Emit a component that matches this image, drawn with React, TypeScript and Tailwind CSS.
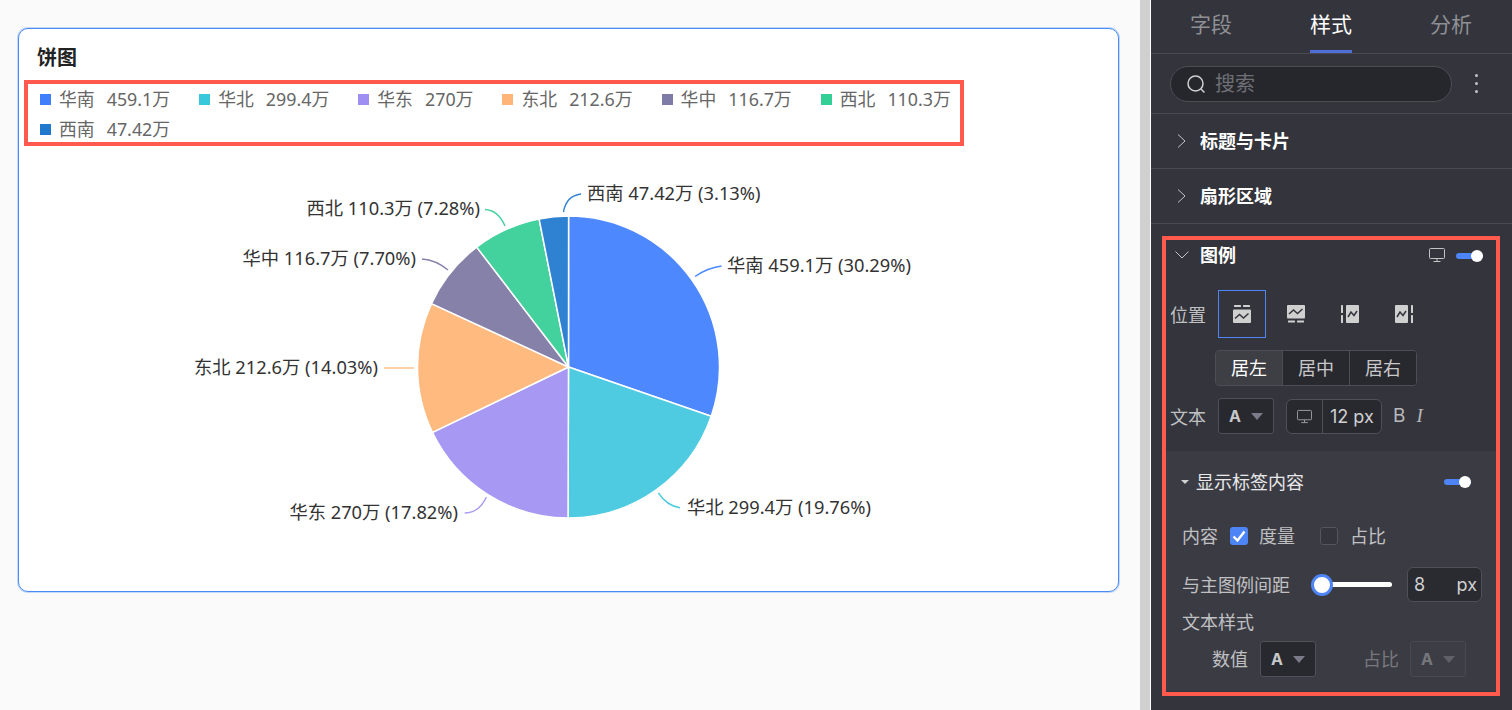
import { ReactNode } from 'react';

const sans = "font-['Noto_Sans','Noto_Sans_CJK_SC',sans-serif]";
const ui = "font-['Inter','Noto_Sans_CJK_SC',sans-serif]";

interface Region {
  name: string;
  value: string;
  percent: number;
  legend: string;
  fill: string;
  label: string;
  labelX: number;
  labelY: number;
  anchor: 'start' | 'end';
  leader: string;
}

const regions: Region[] = [
  { name: '华南', value: '459.1万', percent: 30.29, legend: 'bg-[#3f7ffc]', fill: '#4d88ff', label: '华南 459.1万 (30.29%)', labelX: 727, labelY: 264, anchor: 'start', leader: 'M695 276.5Q707 268 721.5 266' },
  { name: '华北', value: '299.4万', percent: 19.76, legend: 'bg-[#38c8dc]', fill: '#4ecbe0', label: '华北 299.4万 (19.76%)', labelX: 687, labelY: 506, anchor: 'start', leader: 'M658.4 493Q667 506 680 507.7' },
  { name: '华东', value: '270万', percent: 17.82, legend: 'bg-[#a08ff2]', fill: '#a798f3', label: '华东 270万 (17.82%)', labelX: 458, labelY: 511, anchor: 'end', leader: 'M486.4 497Q479 513 464.7 513' },
  { name: '东北', value: '212.6万', percent: 14.03, legend: 'bg-[#ffb577]', fill: '#ffba80', label: '东北 212.6万 (14.03%)', labelX: 378, labelY: 366, anchor: 'end', leader: 'M414 368H384' },
  { name: '华中', value: '116.7万', percent: 7.7, legend: 'bg-[#7e7ba6]', fill: '#8581a9', label: '华中 116.7万 (7.70%)', labelX: 416, labelY: 257, anchor: 'end', leader: 'M448 270Q436 260 422 259' },
  { name: '西北', value: '110.3万', percent: 7.28, legend: 'bg-[#33cf96]', fill: '#43d19e', label: '西北 110.3万 (7.28%)', labelX: 480, labelY: 207, anchor: 'end', leader: 'M505 226Q498 210 485 209.5' },
  { name: '西南', value: '47.42万', percent: 3.13, legend: 'bg-[#2079cc]', fill: '#2f82d1', label: '西南 47.42万 (3.13%)', labelX: 587, labelY: 192, anchor: 'start', leader: 'M563.5 212Q566 196 581 194' },
];

function PieChart() {
  const cx = 568.5;
  const cy = 367;
  const r = 151;
  let total = 0;
  const point = (pct: number) => {
    const a = (pct / 100) * Math.PI * 2;
    return `${cx + r * Math.sin(a)} ${cy - r * Math.cos(a)}`;
  };

  return (
    <svg width="1099" height="445" viewBox="19 146 1099 445" className="block">
      {regions.map((region) => {
        const from = total;
        total += region.percent;
        const large = region.percent > 50 ? 1 : 0;
        return (
          <path
            key={region.name}
            d={`M${cx} ${cy}L${point(from)}A${r} ${r} 0 ${large} 1 ${point(total)}Z`}
            fill={region.fill}
            stroke="#fff"
            strokeWidth="1.5"
          />
        );
      })}
      {regions.map((region) => (
        <g key={region.name}>
          <path d={region.leader} fill="none" stroke={region.fill} strokeWidth="1.4" />
          <text
            x={region.labelX}
            y={region.labelY}
            textAnchor={region.anchor}
            dominantBaseline="central"
            fontSize="18.3"
            fill="#333"
          >
            {region.label}
          </text>
        </g>
      ))}
    </svg>
  );
}

function Monitor({ className }: { className: string }) {
  return (
    <svg viewBox="0 0 16 16" fill="none" stroke="currentColor" strokeWidth="1" className={className}>
      <rect x="0.5" y="1.5" width="15" height="10" rx="1" />
      <path d="M8 11.5V14.5M4.5 14.5H11.5" />
    </svg>
  );
}

function Toggle({ className }: { className: string }) {
  return (
    <div className={`relative h-[6px] w-[27px] flex-none rounded-full bg-[#4e85f6] ${className}`}>
      <div className="absolute right-0 top-[-3px] h-[12px] w-[12px] rounded-full bg-white" />
    </div>
  );
}

function Chevron({ open }: { open?: boolean }) {
  return (
    <svg viewBox="0 0 14 14" fill="none" stroke="#c4c4c7" strokeWidth="1" className="h-[14px] w-[14px] flex-none">
      <path d={open ? 'M0.5 3.5L7 10L13.5 3.5' : 'M4 0.5L11 7L4 13.5'} />
    </svg>
  );
}

function SectionRow({ title }: { title: string }) {
  return (
    <div className="flex h-[55px] items-center gap-[12px] border-b border-[#4a4b52] pl-[23px]">
      <Chevron />
      <span className="text-[18px] font-bold text-white">{title}</span>
    </div>
  );
}

// variant: 0 top, 1 bottom, 2 left, 3 right
function PositionIcon({ variant }: { variant: number }) {
  const boxes = [
    { rect: [0, 4.5, 18, 13.5], line: 'M2 13.5L6.5 9.5L10.5 13L15.5 8.5', dashes: [[1, 0, 7, 2], [10, 0, 7, 2]] },
    { rect: [0, 0, 18, 13.5], line: 'M2 9L6.5 5L10.5 8.5L15.5 4', dashes: [[1, 15.5, 7, 2], [10, 15.5, 7, 2]] },
    { rect: [5, 0, 13, 18], line: 'M7 12L10 7L13 10.5L16 6', dashes: [[0, 0, 2, 8], [0, 10, 2, 8]] },
    { rect: [0, 0, 13, 18], line: 'M2 12L5 7L8 10.5L11 6', dashes: [[16, 0, 2, 8], [16, 10, 2, 8]] },
  ];
  const icon = boxes[variant];
  return (
    <svg viewBox="0 0 18 18" className="h-[18px] w-[18px]">
      <rect x={icon.rect[0]} y={icon.rect[1]} width={icon.rect[2]} height={icon.rect[3]} rx="1" fill="#d0d0d0" />
      <path d={icon.line} fill="none" stroke="#33343c" strokeWidth="1.5" />
      {icon.dashes.map((d, i) => (
        <rect key={i} x={d[0]} y={d[1]} width={d[2]} height={d[3]} rx="0.5" fill="#d0d0d0" />
      ))}
    </svg>
  );
}

function ColorSelect({ disabled }: { disabled?: boolean }) {
  return (
    <div
      className={`flex h-[36px] w-[56px] flex-none items-center rounded-[3px] border pl-[10px] ${
        disabled ? 'border-[#494a50] bg-[#3d3e45]' : 'border-[#505158] bg-[#28292e]'
      }`}
    >
      <span className={`text-[16px] font-bold ${disabled ? 'text-[#77787d]' : 'text-[#c8c8ca]'}`}>A</span>
      <span
        className={`ml-[10px] h-0 w-0 border-x-[6px] border-t-[7px] border-x-transparent ${
          disabled ? 'border-t-[#5f6068]' : 'border-t-[#7a7b88]'
        }`}
      />
    </div>
  );
}

function FieldLabel({ children, className = '', muted }: { children: ReactNode; className?: string; muted?: boolean }) {
  return (
    <span className={`flex-none text-[18px] leading-[24px] ${muted ? 'text-[#77787d]' : 'text-[#c0c0c3]'} ${className}`}>
      {children}
    </span>
  );
}

export default function App() {
  return (
    <div className="flex h-[710px] w-[1512px] overflow-hidden bg-[#fafafa]">
      {/* Chart area */}
      <div className={`w-[1140px] pl-[18px] pt-[28px] ${sans}`}>
        <div className="h-[564px] w-[1101px] rounded-[10px] border border-[#4a8cf7] bg-white shadow-[0_0_0_1px_rgba(74,140,247,0.3)]">
          <div className="flex h-[51px] items-end pb-[9px] pl-[18px] text-[20px] font-bold leading-[26px] text-[#222]">
            饼图
          </div>
          <div className="ml-[5px] h-[66px] w-[940px] border-4 border-[#ff5a4d]">
            <div className="flex flex-wrap gap-x-[29px] gap-y-[2px] pl-[12px] pt-px">
              {regions.map((region) => (
                <div key={region.name} className="flex h-[28px] items-center text-[17.85px] text-[#666]">
                  <span className={`mr-[8px] h-[11px] w-[11px] ${region.legend}`} />
                  <span className="mr-[12px]">{region.name}</span>
                  <span>{region.value}</span>
                </div>
              ))}
            </div>
          </div>
          <PieChart />
        </div>
      </div>

      <div className="w-[10px] bg-[#d0d0d0]" />
      <div className="w-px bg-white" />

      {/* Settings panel */}
      <div className={`h-[710px] w-[361px] bg-[#33343c] ${ui}`}>
        <div className="flex h-[54px] border-b border-[#4a4b52] text-[21px] leading-[28px]">
          <div className="flex w-[120px] justify-center pt-[11px] text-[#8f9094]">字段</div>
          <div className="flex w-[120px] justify-center pt-[11px]">
            <div className="h-[42px] w-[42px] border-b-[3px] border-[#4f6fd8] text-center text-white">样式</div>
          </div>
          <div className="flex w-[120px] justify-center pt-[11px] text-[#8f9094]">分析</div>
        </div>

        <div className="flex h-[60px] items-center border-b border-[#4a4b52] pl-[19px]">
          <div className="flex h-[36px] w-[282px] items-center gap-[9px] rounded-full border border-[#4d4e54] bg-[#26272c] pl-[15px]">
            <svg viewBox="0 0 20 20" fill="none" stroke="#d0d0d2" strokeWidth="1.5" className="h-[20px] w-[20px]">
              <circle cx="9.5" cy="9.5" r="7.5" />
              <path d="M15 15L18.5 18.5" />
            </svg>
            <span className="text-[20px] text-[#6f7075]">搜索</span>
          </div>
          <div className="ml-[23px] flex flex-col gap-[5px]">
            <span className="h-[3px] w-[3px] rounded-full bg-[#c4c4c7]" />
            <span className="h-[3px] w-[3px] rounded-full bg-[#c4c4c7]" />
            <span className="h-[3px] w-[3px] rounded-full bg-[#c4c4c7]" />
          </div>
        </div>

        <SectionRow title="标题与卡片" />
        <SectionRow title="扇形区域" />

        <div className="ml-[11px] mt-[12px] h-[460px] w-[338px] border-4 border-[#ff5a4d]">
          <div className="flex h-[30px] items-center pl-[9px]">
            <Chevron open />
            <span className="ml-[11px] flex-none text-[18px] font-bold text-white">图例</span>
            <Monitor className="ml-[193px] h-[16px] w-[16px] flex-none text-[#c4c4c7]" />
            <Toggle className="ml-[11px] mt-[2px]" />
          </div>

          <div className="mt-[20px] flex items-center pl-[4px]">
            <FieldLabel className="w-[48px] pt-[4px]">位置</FieldLabel>
            <div className="flex gap-[6px]">
              {[0, 1, 2, 3].map((variant) => (
                <div
                  key={variant}
                  className={`flex h-[48px] w-[48px] items-center justify-center border ${
                    variant === 0 ? 'border-[#4e85f6]' : 'border-transparent'
                  }`}
                >
                  <PositionIcon variant={variant} />
                </div>
              ))}
            </div>
          </div>

          <div className="ml-[49px] mt-[12px] flex h-[36px] w-[202px] overflow-hidden rounded-[4px] border border-[#4d4e54] text-[18px]">
            <div className="flex w-[67px] items-center justify-center border-r border-[#4d4e54] bg-[#3e3f45] text-white">居左</div>
            <div className="flex w-[67px] items-center justify-center border-r border-[#4d4e54] bg-[#28292e] text-[#c8c8ca]">居中</div>
            <div className="flex flex-1 items-center justify-center bg-[#28292e] text-[#c8c8ca]">居右</div>
          </div>

          <div className="mt-[12px] flex items-center pl-[4px]">
            <FieldLabel className="w-[48px] pt-[4px]">文本</FieldLabel>
            <ColorSelect />
            <div className="ml-[12px] flex h-[35px] w-[96px] flex-none items-center overflow-hidden rounded-[6px] border border-[#505158] bg-[#28292e]">
              <div className="flex h-full w-[36px] items-center justify-center border-r border-[#505158]">
                <Monitor className="h-[15px] w-[15px] text-[#a0a0a4]" />
              </div>
              <span className="ml-[7px] whitespace-nowrap text-[18px] text-[#d0d0d2]">12 px</span>
            </div>
            <span className="ml-[11px] text-[19px] text-[#b8b8bb]">B</span>
            <span className="ml-[11px] font-['Liberation_Serif',serif] text-[19px] italic text-[#b8b8bb]">I</span>
          </div>

          <div className="mt-[17px] h-[240px] bg-[#3b3c43]">
            <div className="flex h-[62px] items-center pl-[15px]">
              <span className="h-0 w-0 border-x-[4px] border-t-[4px] border-x-transparent border-t-[#d0d0d2]" />
              <span className="ml-[7px] flex-none text-[18px] text-[#e8e8ea]">显示标签内容</span>
              <Toggle className="ml-[140px]" />
            </div>

            <div className="mt-[8px] flex h-[30px] items-center pl-[16px]">
              <FieldLabel className="w-[48px] pt-[2px]">内容</FieldLabel>
              <span className="flex h-[18px] w-[18px] flex-none items-center justify-center rounded-[3px] bg-[#4e85f6]">
                <svg viewBox="0 0 18 18" fill="none" stroke="#fff" strokeWidth="2.4" className="h-[18px] w-[18px]">
                  <path d="M3.5 9.5L7.5 13.5L14.5 4.5" />
                </svg>
              </span>
              <FieldLabel className="ml-[11px] pt-[2px]">度量</FieldLabel>
              <span className="ml-[25px] h-[18px] w-[18px] flex-none rounded-[3px] border border-[#55565c] bg-[#35363d]" />
              <FieldLabel className="ml-[12px] pt-[2px]">占比</FieldLabel>
            </div>

            <div className="mt-[15px] flex h-[36px] items-center pl-[16px]">
              <FieldLabel className="w-[128px] pt-[4px]">与主图例间距</FieldLabel>
              <div className="relative ml-[3px] h-[5px] w-[79px] flex-none rounded-full bg-white">
                <div className="absolute left-[-2px] top-[-8px] h-[22px] w-[22px] rounded-full border-[3px] border-[#4e85f6] bg-white" />
              </div>
              <div className="ml-[15px] flex h-[35px] w-[75px] flex-none items-center justify-between rounded-[6px] border border-[#505158] bg-[#2a2b30] pl-[6px] pr-[4px] text-[18px] text-[#d0d0d2]">
                <span>8</span>
                <span>px</span>
              </div>
            </div>

            <div className="mt-[8px] pl-[16px]">
              <FieldLabel className="block pt-[1px]">文本样式</FieldLabel>
            </div>

            <div className="mt-[6px] flex items-center">
              <FieldLabel className="ml-[46px] w-[48px] pt-[2px]">数值</FieldLabel>
              <ColorSelect />
              <FieldLabel muted className="ml-[47px] w-[47px] pt-[2px]">占比</FieldLabel>
              <ColorSelect disabled />
            </div>
          </div>
        </div>
      </div>
    </div>
  );
}
